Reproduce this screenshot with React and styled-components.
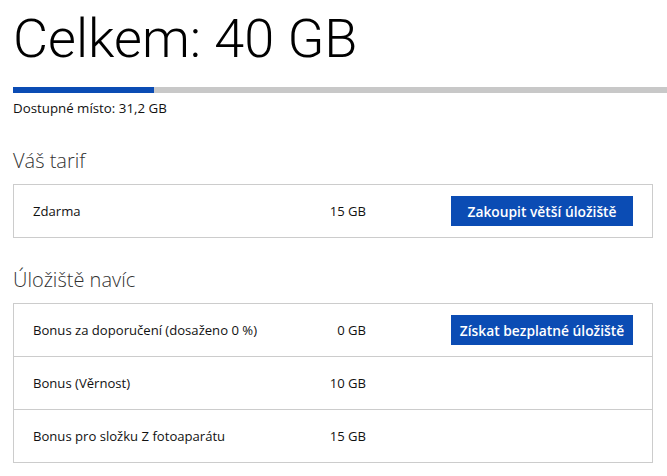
import React from 'react';
import styled, { createGlobalStyle } from 'styled-components';

const GlobalStyle = createGlobalStyle`
    body {
        margin: 0;
        background: #fff;
        font-family: 'Open Sans', 'Noto Sans', sans-serif;
        color: #000;
        overflow: hidden;
    }
`;

const plan = [{ label: 'Zdarma', size: '15 GB', action: 'Zakoupit větší úložiště' }];

const extras = [
    {
        label: 'Bonus za doporučení (dosaženo 0 %)',
        size: '0 GB',
        action: 'Získat bezplatné úložiště'
    },
    { label: 'Bonus (Věrnost)', size: '10 GB' },
    { label: 'Bonus pro složku Z fotoaparátu', size: '15 GB' }
];

const used = 0.216;

const StorageTable = ({ rows }) => (
    <Table>
        {rows.map(row => (
            <Row key={row.label}>
                <Label>{row.label}</Label>
                <Size>{row.size}</Size>
                {row.action && <ActionButton>{row.action}</ActionButton>}
            </Row>
        ))}
    </Table>
);

export default function App() {
    return (
        <Page>
            <GlobalStyle />
            <Title>Celkem: 40 GB</Title>
            <Meter>
                <MeterFill style={{ width: `${used * 100}%` }} />
            </Meter>
            <Available>Dostupné místo: 31,2 GB</Available>
            <SectionTitle>Váš tarif</SectionTitle>
            <StorageTable rows={plan} />
            <SectionTitle>Úložiště navíc</SectionTitle>
            <StorageTable rows={extras} />
        </Page>
    );
}

const Page = styled.div`
    padding: 0 14px 0 13px;
    display: flex;
    flex-direction: column;
`;

const Title = styled.h1`
    font-family: 'Roboto', sans-serif;
    font-weight: 300;
    font-size: 54px;
    line-height: 77px;
    margin: 0;
`;

const Meter = styled.div`
    height: 6px;
    background: #c8c8c8;
    margin: 10px -14px 0 0;
`;

const MeterFill = styled.div`
    height: 100%;
    background: #0b4cb4;
`;

const Available = styled.div`
    font-size: 13.3px;
    line-height: 18px;
    margin: 6px 0 2px;
    color: #111;
`;

const SectionTitle = styled.h2`
    font-weight: 300;
    font-size: 20px;
    line-height: 26px;
    margin: 29px 0 10px;
    color: #333;
`;

const Table = styled.div`
    border: 1px solid #cccccc;
    display: flex;
    flex-direction: column;
`;

const Row = styled.div`
    display: grid;
    grid-template-columns: 233px 100px 1fr;
    align-items: center;
    height: 52px;
    padding: 0 19px 0 19px;

    & + & {
        border-top: 1px solid #cccccc;
    }
`;

const Label = styled.div`
    font-size: 13.1px;
    color: #111;
    white-space: nowrap;
`;

const Size = styled.div`
    font-size: 13.1px;
    color: #111;
    text-align: right;
`;

const ActionButton = styled.button`
    justify-self: end;
    width: 182px;
    height: 30px;
    border: none;
    background: #0b4cb4;
    color: #fff;
    font-family: 'Open Sans', sans-serif;
    font-weight: 600;
    font-size: 13.8px;
    padding: 0;
    cursor: pointer;
`;
